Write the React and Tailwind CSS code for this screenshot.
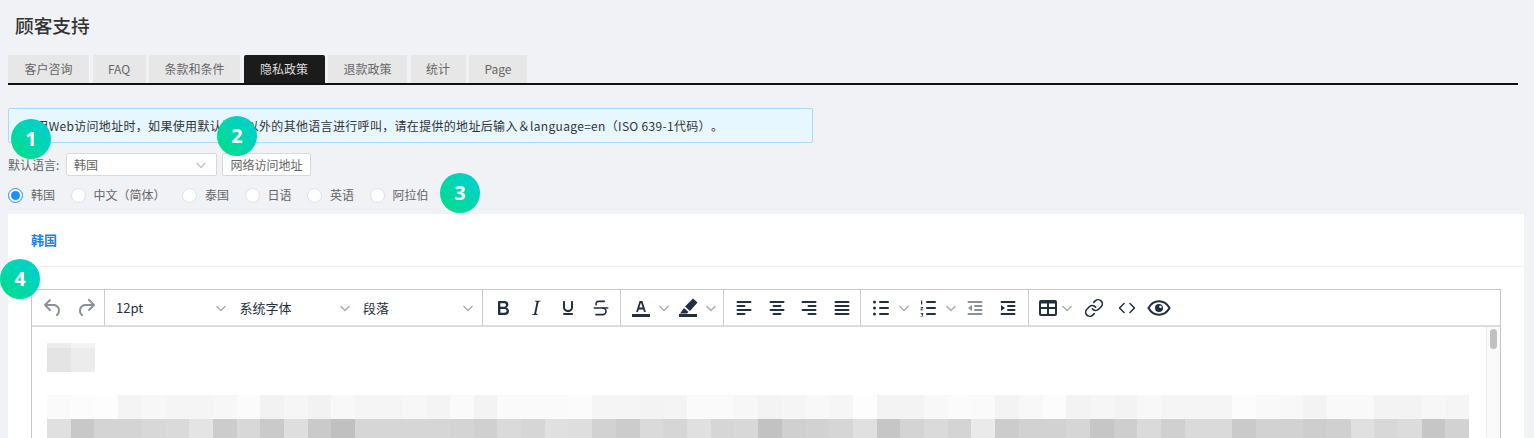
import { Link, Code, Strikethrough } from "lucide-react";

const ink = "#222f3e";
const tabs = [
  { label: "客户咨询", w: "w-[81px]" },
  { label: "FAQ", w: "w-[53px]" },
  { label: "条款和条件", w: "w-[91px]" },
  { label: "隐私政策", w: "w-[81px]", active: true },
  { label: "退款政策", w: "w-[79px]" },
  { label: "统计", w: "w-[55px]" },
  { label: "Page", w: "w-[58px]" },
];
const langs = ["韩国", "中文（简体）", "泰国", "日语", "英语", "阿拉伯"];

// blurred text in the editor body, one grey value per mosaic cell
const lightRow = "fa fc fd f4 f7 f5 f5 f7 fb f2 f6 f2 f8 f5 f5 f7 f4 fa f3 fa fa fa fb f5 f5 f3 f4 fa fa f7 f3 f5 f8 f6 fd f3 f3 f8 fb fa f3 f8 fc f3 f6 f3 f8 f5 f5 f5 fc f9 f8 f3 f9 f9 f3 f3 f7 f5".split(" ");
const darkRow = "e0 c8 d4 d4 d8 da e4 cc d8 ca de ca c0 d6 d6 d6 d6 d4 d0 da d6 e0 de d2 cc da d6 e0 d6 d8 c2 d0 d2 d6 e0 c6 d4 da d4 ea cc d2 d2 d6 c6 ce da d0 da da ca d2 d2 ce d0 e0 d8 dc c6 d2".split(" ");

function Chevron({ color = "#a7acb2", size = 10 }) {
  return (
    <svg width={size} height={size} viewBox="0 0 10 10" fill="none" className="shrink-0">
      <path d="M0.5 3l4.5 4.5L9.5 3" stroke={color} strokeWidth="1.4" />
    </svg>
  );
}

function Icon({ children, color = ink }) {
  return (
    <svg width="24" height="24" viewBox="0 0 24 24" fill={color} className="shrink-0">
      {children}
    </svg>
  );
}

function Btn({ children }) {
  return <div className="w-[32.5px] h-full flex items-center justify-center shrink-0">{children}</div>;
}

function SplitBtn({ children }) {
  return (
    <div className="flex items-center h-full shrink-0">
      <div className="w-[31px] flex justify-center">{children}</div>
      <div className="w-[16px] flex justify-center"><Chevron /></div>
    </div>
  );
}

function FontSelect({ label }) {
  return (
    <div className="w-[123.5px] h-full pl-[11px] pr-[2.5px] flex items-center justify-between shrink-0 text-[13px] text-[#222f3e]">
      <span>{label}</span>
      <Chevron />
    </div>
  );
}

function Lines({ rows }) {
  return (
    <Icon>
      {rows.map(([x, y, w]) => <rect key={y} x={x} y={y} width={w} height="2" rx="1" />)}
    </Icon>
  );
}

function Badge({ n, className }) {
  return (
    <div className={`absolute w-10 h-10 rounded-full bg-linear-to-tr from-[#00de80] to-[#00cdd6] text-white text-[20px] font-bold font-['Noto_Sans',sans-serif] flex items-center justify-center ${className}`}>
      {n}
    </div>
  );
}

export default function App() {
  return (
    <div className="relative h-[438px] overflow-hidden bg-[#f0f2f6] [text-spacing-trim:space-all] font-['Noto_Sans_CJK_SC','Noto_Sans',sans-serif]">
      <h1 className="h-[51px] mb-[4px] pl-[15px] flex items-center text-[18.7px] font-medium text-[#333]">顾客支持</h1>

      {/* Tabs */}
      <div className="ml-2 w-[1510px] h-[30px] flex gap-[3.5px] border-b-2 border-[#111]">
        {tabs.map((t) => (
          <div
            key={t.label}
            className={`${t.w} h-[28px] flex items-center justify-center text-xs ${t.active ? "bg-[#1b1b1b] text-[#ddd] rounded-t-[2px]" : "bg-[#e7e7e7] text-[#666]"}`}
          >
            {t.label}
          </div>
        ))}
      </div>

      {/* Notice */}
      <div className="ml-2 mt-[23px] w-[805px] h-[35px] pl-[15px] flex items-center text-xs tracking-[0.32px] text-[#333] bg-[#e6f7ff] border border-[#a8dcfd] rounded-[2px]">
        使用Web访问地址时，如果使用默认语言以外的其他语言进行呼叫，请在提供的地址后输入＆language=en（ISO 639-1代码）。
      </div>

      {/* Default language */}
      <div className="ml-2 mt-[10px] h-[23px] flex items-center text-xs text-[#666]">
        <span className="w-[58px]">默认语言:</span>
        <div className="w-[151px] h-full pl-[7px] pr-[10px] flex items-center justify-between bg-white border border-[#d9d9d9] rounded-[2px]">
          <span>韩国</span>
          <Chevron color="#c4c4c4" />
        </div>
        <div className="ml-[5px] w-[89px] h-full flex items-center justify-center bg-white border border-[#d9d9d9] rounded-[2px]">
          网络访问地址
        </div>
      </div>

      {/* Language radios */}
      <div className="ml-2 mt-[11px] h-4 flex items-center text-xs text-[#666]">
        {langs.map((l, i) => (
          <div key={l} className="flex items-center gap-2 mr-[15.5px]">
            <span className={`w-[15px] h-[15px] rounded-full bg-white border flex items-center justify-center ${i === 0 ? "border-[#1890ff]" : "border-[#dfdfdf]"}`}>
              {i === 0 && <span className="w-[9px] h-[9px] rounded-full bg-[#1890ff]" />}
            </span>
            <span className={i === 1 ? "w-[73px]" : ""}>{l}</span>
          </div>
        ))}
      </div>

      {/* Panel */}
      <div className="ml-2 mt-[11px] w-[1516px] h-[300px] bg-white">
        <div className="h-[53px] pl-[23px] flex items-center text-[13px] font-bold text-[#1c84e0] border-b border-[#f0f0f0]">韩国</div>

        <div className="ml-[23px] mt-[22px] w-[1470px] border border-[#c6c6c6]">
          {/* Toolbar */}
          <div className="h-[37px] flex border-b-2 border-[#dcdcdc]">
            <div className="w-[73px] pl-[4px] flex border-r border-[#ccc] shrink-0">
              <div className="w-[33px] flex items-center justify-center">
                <Icon color="#8a9098"><path d="M6.4 8H12c3.7 0 6.2 2 6.8 5.1.6 2.7-.4 5.6-2.3 6.8a1 1 0 0 1-1-1.8c1.1-.6 1.8-2.7 1.4-4.6-.5-2.1-2.1-3.5-4.9-3.5H6.4l3.3 3.3a1 1 0 1 1-1.4 1.4l-5-5a1 1 0 0 1 0-1.4l5-5a1 1 0 0 1 1.4 1.4L6.4 8Z" /></Icon>
              </div>
              <div className="w-[33px] flex items-center justify-center">
                <Icon color="#8a9098"><path d="M17.6 10H12c-2.8 0-4.4 1.4-4.9 3.5-.4 2 .3 4 1.4 4.6a1 1 0 1 1-1 1.8c-2-1.2-2.9-4.1-2.3-6.8.6-3 3-5.1 6.8-5.1h5.6l-3.3-3.3a1 1 0 1 1 1.4-1.4l5 5a1 1 0 0 1 0 1.4l-5 5a1 1 0 0 1-1.4-1.4l3.3-3.3Z" /></Icon>
              </div>
            </div>

            <div className="w-[378px] flex border-r border-[#ccc] shrink-0">
              <FontSelect label="12pt" />
              <FontSelect label="系统字体" />
              <FontSelect label="段落" />
            </div>

            <div className="w-[138px] pl-[4px] flex border-r border-[#ccc] shrink-0">
              <Btn><Icon><path d="M7.8 19c-.3 0-.5 0-.6-.2l-.2-.5V5.7c0-.2 0-.4.2-.5l.6-.2h5c1.5 0 2.7.3 3.5 1 .7.6 1.1 1.4 1.1 2.5a3 3 0 0 1-.6 1.9c-.4.6-1 1-1.6 1.2.4.1.9.3 1.3.6s.8.7 1 1.2c.4.4.5 1 .5 1.6 0 1.3-.4 2.3-1.3 3-.8.7-2.1 1-3.8 1H7.8Zm5-8.3c.6 0 1.2-.1 1.6-.5.4-.3.6-.7.6-1.3 0-1.1-.8-1.7-2.3-1.7H9.3v3.5h3.4Zm.5 6c.7 0 1.3-.1 1.7-.4.4-.4.6-.9.6-1.5s-.2-1-.7-1.4c-.4-.3-1-.4-2-.4H9.4v3.8h4Z" /></Icon></Btn>
              <Btn><Icon><path d="m16.7 4.7-.1.9h-.3c-.6 0-1 0-1.4.3-.3.3-.4.6-.5 1.1l-2.1 9.8v.6c0 .5.4.8 1.4.8h.2l-.2.8H8l.2-.8h.2c1.1 0 1.8-.5 2-1.5l2-9.8.1-.5c0-.6-.4-.8-1.4-.8h-.3l.2-.9h5.8Z" /></Icon></Btn>
              <Btn><Icon><path d="M16 5c.6 0 1 .4 1 1v5.5a4 4 0 0 1-.4 1.8l-1 1.4a5.3 5.3 0 0 1-5.5 1 5 5 0 0 1-1.6-1c-.5-.4-.8-.9-1.1-1.4a4 4 0 0 1-.4-1.8V6c0-.6.4-1 1-1s1 .4 1 1v5.5c0 .3 0 .6.2 1l.6.7a3.3 3.3 0 0 0 2.2.8 3.4 3.4 0 0 0 2.2-.8c.3-.2.4-.5.6-.8l.2-.9V6c0-.6.4-1 1-1ZM8 17h8c.6 0 1 .4 1 1s-.4 1-1 1H8a1 1 0 0 1 0-2Z" /></Icon></Btn>
              <Btn><Strikethrough size={20} color={ink} strokeWidth={2} /></Btn>
            </div>

            <div className="w-[103px] pl-[4px] flex border-r border-[#ccc] shrink-0">
              <SplitBtn>
                <Icon>
                  <rect x="3" y="18" width="18" height="3" />
                  <path d="M8 16l3.2-10h1.6L16 16M9.3 12.5h5.4" fill="none" stroke={ink} strokeWidth="1.8" />
                </Icon>
              </SplitBtn>
              <SplitBtn>
                <Icon>
                  <rect x="3" y="18" width="18" height="3" />
                  <path d="M17 2.5l4.5 4-7.5 8.5-5-4.5L17 2.5ZM8 12l4.5 4-1.5 1.5H4L8 12Z" />
                </Icon>
              </SplitBtn>
            </div>

            <div className="w-[137px] pl-[4px] flex border-r border-[#ccc] shrink-0">
              <Btn><Lines rows={[[4.5, 5, 15], [4.5, 9, 9], [4.5, 13, 15], [4.5, 17, 9]]} /></Btn>
              <Btn><Lines rows={[[4.5, 5, 15], [7.5, 9, 9], [4.5, 13, 15], [7.5, 17, 9]]} /></Btn>
              <Btn><Lines rows={[[4.5, 5, 15], [10.5, 9, 9], [4.5, 13, 15], [10.5, 17, 9]]} /></Btn>
              <Btn><Lines rows={[[4.5, 5, 15], [4.5, 9, 15], [4.5, 13, 15], [4.5, 17, 15]]} /></Btn>
            </div>

            <div className="w-[168px] pl-[4px] flex border-r border-[#ccc] shrink-0">
              <SplitBtn>
                <Icon>
                  <circle cx="5.5" cy="6" r="1.5" /><circle cx="5.5" cy="12" r="1.5" /><circle cx="5.5" cy="18" r="1.5" />
                  <rect x="10" y="5" width="10" height="2" rx="1" /><rect x="10" y="11" width="10" height="2" rx="1" /><rect x="10" y="17" width="10" height="2" rx="1" />
                </Icon>
              </SplitBtn>
              <SplitBtn>
                <Icon>
                  <path d="M5 4.5h1.2v4H5ZM4.5 11h2.6v.8l-1.6 1.6h1.6v.8H4.5v-.8l1.6-1.6H4.5ZM4.5 17h2.6v3.6H4.5v-.7h1.7v-.8H5v-.6h1.2v-.8H4.5Z" />
                  <rect x="10" y="5" width="10" height="2" rx="1" /><rect x="10" y="11" width="10" height="2" rx="1" /><rect x="10" y="17" width="10" height="2" rx="1" />
                </Icon>
              </SplitBtn>
              <Btn>
                <Icon color="#8a9098">
                  <rect x="4.5" y="5" width="15" height="2" rx="1" /><rect x="11" y="9" width="8.5" height="2" rx="1" /><rect x="11" y="13" width="8.5" height="2" rx="1" /><rect x="4.5" y="17" width="15" height="2" rx="1" />
                  <path d="M9 9v6l-4-3Z" />
                </Icon>
              </Btn>
              <Btn>
                <Icon>
                  <rect x="4.5" y="5" width="15" height="2" rx="1" /><rect x="11" y="9" width="8.5" height="2" rx="1" /><rect x="11" y="13" width="8.5" height="2" rx="1" /><rect x="4.5" y="17" width="15" height="2" rx="1" />
                  <path d="M5 9v6l4-3Z" />
                </Icon>
              </Btn>
            </div>

            <div className="pl-[5px] flex items-center">
              <div className="w-[28px] flex justify-center">
                <Icon>
                  <path fillRule="evenodd" d="M5 4h14a2 2 0 0 1 2 2v12a2 2 0 0 1-2 2H5a2 2 0 0 1-2-2V6a2 2 0 0 1 2-2Zm0 3.5V11h6V7.5H5Zm8 0V11h6V7.5h-6ZM5 13v5h6v-5H5Zm8 0v5h6v-5h-6Z" />
                </Icon>
              </div>
              <Chevron />
              <div className="w-[6px]" />
              <Btn><Link size={20} color={ink} strokeWidth={2} /></Btn>
              <Btn><Code size={18} color={ink} strokeWidth={2} /></Btn>
              <Btn>
                <Icon>
                  <path d="M1.5 12C4 7.5 7.7 5.3 12 5.3s8 2.2 10.5 6.7C20 16.5 16.3 18.7 12 18.7S4 16.5 1.5 12Z" fill="none" stroke={ink} strokeWidth="2" />
                  <path fillRule="evenodd" d="M12 8a4 4 0 1 1 0 8 4 4 0 0 1 0-8Zm1.5 1.5a1.3 1.3 0 1 0 0 2.6 1.3 1.3 0 0 0 0-2.6Z" />
                </Icon>
              </Btn>
            </div>
          </div>

          {/* Editor body, text is blurred in the original */}
          <div className="h-[150px] flex">
            <div className="flex-1 pl-[15px] pt-[16px]">
              <div className="flex w-[48px]">
                <div className="flex-1 h-[29px] bg-[#e4e4e4] border-t-[5px] border-[#ececec]" />
                <div className="flex-1 h-[29px] bg-[#ececec] border-t-[5px] border-[#f3f3f3]" />
              </div>
              <div className="mt-[23px] w-[1422px] flex h-6">
                {lightRow.map((c, i) => (
                  <div key={i} className="flex-1" style={{ backgroundColor: `#${c}${c}${c}` }} />
                ))}
              </div>
              <div className="w-[1422px] flex h-6">
                {darkRow.map((c, i) => (
                  <div key={i} className="flex-1" style={{ backgroundColor: `#${c}${c}${c}` }} />
                ))}
              </div>
            </div>
            <div className="w-[14px] bg-[#fafafa] border-l border-[#ececec] pl-[3px] pt-[2px]">
              <div className="w-[7px] h-[20px] rounded-full bg-[#c1c1c1]" />
            </div>
          </div>
        </div>
      </div>

      <Badge n="1" className="left-[11px] top-[119px]" />
      <Badge n="2" className="left-[217px] top-[116px]" />
      <Badge n="3" className="left-[440px] top-[173px]" />
      <Badge n="4" className="left-0 top-[259px]" />
    </div>
  );
}
